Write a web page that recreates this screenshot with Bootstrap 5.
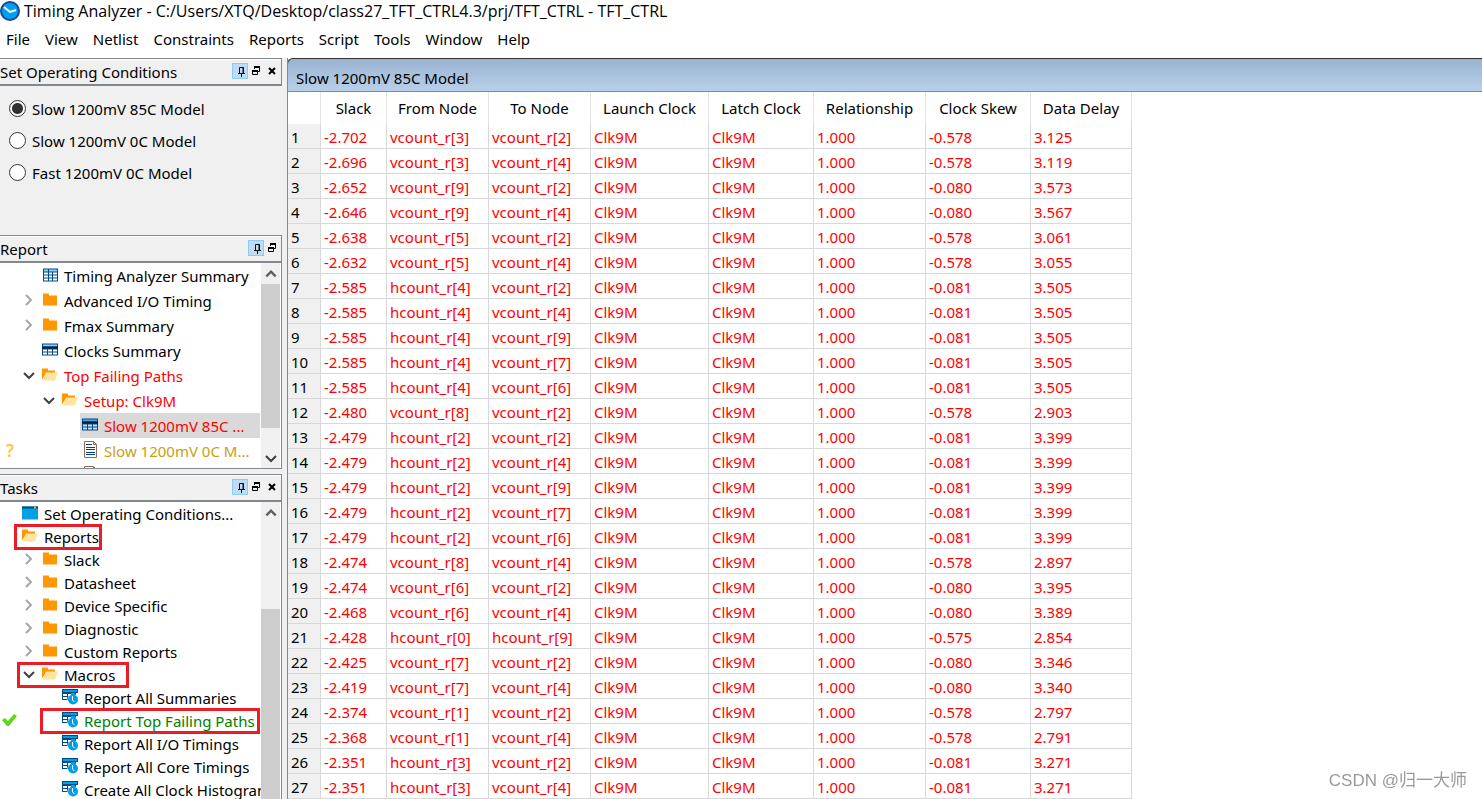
<!DOCTYPE html>
<html lang="en">
<head>
<meta charset="utf-8">
<meta name="viewport" content="width=device-width, initial-scale=1">
<title>Timing Analyzer</title>
<link href="https://cdn.jsdelivr.net/npm/bootstrap@5.3.0/dist/css/bootstrap.min.css" rel="stylesheet">
<style>
  body { font: 15px/24px "Noto Sans", "Noto Sans CJK SC", sans-serif; color: #000; background: #fff; }
  button { padding: 0; border: 0; background: none; color: inherit; }
  svg { display: block; flex: none; }
  .title-bar { height: 22px; font: 16px/22px "Open Sans", "Noto Sans", sans-serif; }
  .menu-bar { height: 36px; gap: 15px; padding: 0 6px 2px; }
  .menu-bar a { color: #000; text-decoration: none; }
  .workspace { background: #f0f0f0; gap: 5px; }
  .dock { width: 282px; }
  .dock-head { height: 28px; border: 1px solid #828790; border-left: 0; border-bottom-width: 2px; box-shadow: inset 0 1px #fff; padding: 0 1px 0 0; }
  .dock-head h2 { font-size: 15px; line-height: 26px; margin: 0; font-weight: 400; }
  .dock-head button { width: 16px; height: 16px; }
  .dock-head .pin { background: #bfdcf4; outline: 1px solid #90c8f6; outline-offset: -1px; }
  .conditions { padding: 7px 9px 46px; }
  .conditions label { height: 32px; gap: 6px; }
  .conditions input { appearance: none; width: 17px; height: 17px; margin: 0 0 2px; border: 1px solid #333; border-radius: 50%; background: #fff; }
  .conditions input:checked { background: radial-gradient(circle, #333 0 5px, #fff 6px); }
  .tree-frame { background: #fff; border-right: 1px solid #828790; }
  .report-frame { height: 206px; border-bottom: 1px solid #828790; margin-bottom: 5px; }
  .tree { min-width: 0; margin: 0; list-style: none; padding: 0 1px 0 0; overflow: hidden; }
  .tree li { position: relative; display: flex; align-items: center; height: 25px; white-space: nowrap; }
  .tasks li { height: 23px; }
  .slot { width: 20px; height: 20px; flex: none; display: flex; align-items: center; justify-content: center; }
  .slot svg { margin: 0 2px 2px 0; }
  .node { flex: 1 1 0; min-width: 0; display: flex; align-items: center; height: 100%; padding-left: 2px; gap: 6px; }
  .node svg { margin-bottom: 3px; }
  .chosen { background: #d9d9d9; }
  .failing { color: #f00; }
  .stale { color: #c8a010; }
  .done { color: #008000; }
  .unknown { color: #ffc34d; font-size: 17px; font-weight: 600; }
  .callout { position: absolute; border: 3px solid #ed1c24; top: -1px; bottom: -2px; pointer-events: none; }
  .scroller { width: 19px; flex: none; background: #f0f0f0; margin-right: 1px; }
  .scroller button { height: 21px; display: flex; align-items: center; justify-content: center; }
  .thumb { background: #cdcdcd; }
  .pane { border-left: 1px solid #828790; background: #fff; min-width: 0; }
  .pane-head { height: 34px; margin-left: -1px; border: solid #333; border-width: 1px 0 0 1px; border-bottom: 1px solid #828790; border-top-left-radius: 6px; background: linear-gradient(#9ab3d0, #b8d0ea); padding: 7px 8px 0; font-size: 15px; line-height: 24px; margin-bottom: 0; font-weight: 400; }
  .paths { table-layout: fixed; width: 844px; border-collapse: separate; border-spacing: 0; }
  .paths th { font-weight: 400; }
  .paths thead th { height: 32px; padding: 0; text-align: center; border-right: 1px solid #e5e5e5; line-height: 24px; }
  .paths td, .paths tbody th { height: 25px; line-height: 20px; padding: 3px 0 1px 3px; border-right: 1px solid #d8d8d8; border-bottom: 1px solid #d8d8d8; white-space: nowrap; }
  .paths td { color: #f00; }
  .paths tbody th { background: #f0f0f0; }
  .watermark { position: fixed; right: 15px; bottom: 6px; font: 17px/24px "Liberation Sans", "Noto Sans CJK SC", sans-serif; color: #999; }
</style>
</head>
<body class="vh-100 d-flex flex-column overflow-hidden">
<svg class="d-none" aria-hidden="true">
  <symbol id="grid" viewBox="0 0 16 16"><path fill="#004a86" d="M1 2h15v13H1z"/><path fill="#8fd0f5" d="M2 3h4v2H2zM7 3h8v2H7z"/><path fill="#fff" d="M2 6h4v2H2zM7 6h3v2H7zM11 6h4v2h-4zM2 9h4v2H2zM7 9h3v2H7zM11 9h4v2h-4zM2 12h4v2H2zM7 12h3v2H7zM11 12h4v2h-4z"/></symbol>
  <symbol id="sheet" viewBox="0 0 16 16"><path fill="#004a86" d="M0 2h16v12H0z"/><path fill="#8fd0f5" d="M1 3h14v2H1z"/><path fill="#001a40" d="M0 5h16v2H0z"/><path fill="#fff" d="M1 8h4v2H1zM6 8h4v2H6zM11 8h4v2h-4zM1 11h4v2H1zM6 11h4v2H6zM11 11h4v2h-4z"/></symbol>
  <symbol id="sheet-on" viewBox="0 0 16 16"><path fill="#004a86" d="M0 2h16v12H0z"/><path fill="#4fa4dc" d="M1 3h14v2H1z"/><path fill="#001a40" d="M0 5h16v2H0z"/><path fill="#c5e0f2" d="M1 8h4v2H1zM6 8h4v2H6zM11 8h4v2h-4zM1 11h4v2H1zM6 11h4v2H6zM11 11h4v2h-4z"/></symbol>
  <symbol id="folder" viewBox="0 0 16 16"><path fill="#ff9800" d="M1 2h6v2h8v10H1z"/></symbol>
  <symbol id="folder-open" viewBox="0 0 16 16"><path fill="#ff9800" d="M0 2h6v2h7v3H4L0 13z"/><path fill="#ffe4a0" d="M4 6h12l-3 8H1z"/></symbol>
  <symbol id="page" viewBox="0 0 16 17"><path fill="#fffdf5" stroke="#8a6d5f" d="M2.500 .5h9l3 3v13h-12z"/><path fill="none" stroke="#8a6d5f" d="M11.500 .5v3h3"/><path stroke="#003f8c" d="M4 3.500h6M4 6.500h9M4 8.500h9M4 11.500h9M4 13.500h9"/></symbol>
  <symbol id="window" viewBox="0 0 16 16"><path fill="#00a0e6" d="M0 2h16v13H0z"/><path fill="#004a86" d="M0 2h16v2H0z"/><path fill="#ffb000" d="M12 2h2v2h-2z"/></symbol>
  <symbol id="timer" viewBox="0 0 16 17"><path fill="#004a86" d="M0 1h16v4h-2v8H0z"/><path fill="#00a0e6" d="M1 2h14v2H1z"/><path fill="#fff" d="M1 6h4v2H1zM6 6h3v2H6zM1 9h4v2H1zM6 9h2v2H6z"/><path fill="#fff" d="M0 12h7v2H0z"/><circle cx="11" cy="11.500" r="5.500" fill="#fff"/><path fill="#00a0e6" d="M9 5h4v2H9z"/><circle cx="11" cy="11.500" r="5" fill="#00a0e6"/><path fill="none" stroke="#fff" d="M10.500 8v4l2 2"/></symbol>
  <symbol id="right" viewBox="0 0 12 12"><path fill="none" stroke="#a6a6a6" stroke-width="2" d="m3 1 5 5-5 5"/></symbol>
  <symbol id="down" viewBox="0 0 12 12"><path fill="none" stroke="#404040" stroke-width="2" d="m1 4 5 5 5-5"/></symbol>
  <symbol id="up" viewBox="0 0 12 12"><path fill="none" stroke="#606060" stroke-width="2" d="m2 8 4-4 4 4"/></symbol>
  <symbol id="tick" viewBox="0 0 16 14"><path fill="#5fd61e" d="m1 7 3-2 3 3 6-7 3 2-8 10H6z"/></symbol>
  <symbol id="pin" viewBox="0 0 16 16"><path fill="none" stroke="#111" d="M7.500 10V4.500h4V10M6 10.500h7M9.500 11v3"/><path stroke="#111" d="M11 4v6"/></symbol>
  <symbol id="float" viewBox="0 0 16 16"><path fill="none" stroke="#000" d="M6.500 6V4.500h5v4H10M4.500 7.500h5v4h-5z"/><path fill="#000" d="M6 3h6v2H6zM4 7h6v2H4z"/></symbol>
  <symbol id="close" viewBox="0 0 16 16"><path stroke="#000" stroke-width="2" d="m5 5 6 6m0-6-6 6"/></symbol>
</svg>

<header>
  <div class="title-bar d-flex align-items-center">
    <svg width="20" height="20" viewBox="0 0 20 20"><circle cx="10" cy="10" r="9" fill="#00a0f0" stroke="#17479e" stroke-width="2"/><path fill="none" stroke="#fff" stroke-width="2" d="m4 6 6 5 6-2"/></svg>
    <span class="ps-1 text-nowrap">Timing Analyzer - C:/Users/XTQ/Desktop/class27_TFT_CTRL4.3/prj/TFT_CTRL - TFT_CTRL</span>
  </div>
  <nav class="menu-bar d-flex align-items-center">
    <a href="#">File</a><a href="#">View</a><a href="#">Netlist</a><a href="#">Constraints</a><a href="#">Reports</a><a href="#">Script</a><a href="#">Tools</a><a href="#">Window</a><a href="#">Help</a>
  </nav>
</header>

<main class="workspace d-flex flex-grow-1 overflow-hidden">
  <aside class="dock d-flex flex-column flex-shrink-0">
    <section>
      <div class="dock-head d-flex">
        <h2 class="flex-grow-1">Set Operating Conditions</h2>
        <div class="d-flex mt-1">
          <button class="pin" aria-label="Pin"><svg width="16" height="16"><use href="#pin"/></svg></button>
          <button aria-label="Float"><svg width="16" height="16"><use href="#float"/></svg></button>
          <button aria-label="Close"><svg width="16" height="16"><use href="#close"/></svg></button>
        </div>
      </div>
      <div class="conditions">
        <label class="d-flex align-items-center" for="c85"><input type="radio" name="model" id="c85" checked>Slow 1200mV 85C Model</label>
        <label class="d-flex align-items-center" for="c0"><input type="radio" name="model" id="c0">Slow 1200mV 0C Model</label>
        <label class="d-flex align-items-center" for="f0"><input type="radio" name="model" id="f0">Fast 1200mV 0C Model</label>
      </div>
    </section>

    <section>
      <div class="dock-head d-flex">
        <h2 class="flex-grow-1">Report</h2>
        <div class="d-flex mt-1">
          <button class="pin" aria-label="Pin"><svg width="16" height="16"><use href="#pin"/></svg></button>
          <button aria-label="Float"><svg width="16" height="16"><use href="#float"/></svg></button>
        </div>
      </div>
      <div class="tree-frame report-frame d-flex">
        <ul class="tree flex-grow-1" id="reportTree"></ul>
        <div class="scroller d-flex flex-column">
          <button aria-label="Scroll up"><svg width="14" height="14"><use href="#up"/></svg></button>
          <div class="thumb" style="height:70%"></div>
          <button class="mt-auto" aria-label="Scroll down"><svg width="12" height="12"><use href="#down"/></svg></button>
        </div>
      </div>
    </section>

    <section class="d-flex flex-column flex-grow-1 overflow-hidden">
      <div class="dock-head d-flex flex-shrink-0">
        <h2 class="flex-grow-1">Tasks</h2>
        <div class="d-flex mt-1">
          <button class="pin" aria-label="Pin"><svg width="16" height="16"><use href="#pin"/></svg></button>
          <button aria-label="Float"><svg width="16" height="16"><use href="#float"/></svg></button>
          <button aria-label="Close"><svg width="16" height="16"><use href="#close"/></svg></button>
        </div>
      </div>
      <div class="tree-frame d-flex flex-grow-1 overflow-hidden">
        <ul class="tree tasks flex-grow-1" id="taskTree"></ul>
        <div class="scroller d-flex flex-column">
          <button aria-label="Scroll up"><svg width="14" height="14"><use href="#up"/></svg></button>
          <div class="thumb mt-auto" style="height:64%"></div>
        </div>
      </div>
    </section>
  </aside>

  <section class="pane flex-grow-1 overflow-hidden">
    <h1 class="pane-head">Slow 1200mV 85C Model</h1>
    <table class="paths">
      <colgroup><col style="width:33px"><col style="width:66px"><col style="width:102px"><col style="width:102px"><col style="width:118px"><col style="width:105px"><col style="width:112px"><col style="width:105px"><col style="width:101px"></colgroup>
      <thead><tr><th></th><th>Slack</th><th>From Node</th><th>To Node</th><th>Launch Clock</th><th>Latch Clock</th><th>Relationship</th><th>Clock Skew</th><th>Data Delay</th></tr></thead>
      <tbody id="pathRows"></tbody>
    </table>
  </section>
</main>
<div class="watermark">CSDN @归一大师</div>

<script>
  // level, icon, label, arrow, text class, status, callout [left, right]
  const report = [
    [1, 'grid', 'Timing Analyzer Summary'],
    [1, 'folder', 'Advanced I/O Timing', 'right'],
    [1, 'folder', 'Fmax Summary', 'right'],
    [1, 'sheet', 'Clocks Summary'],
    [1, 'folder-open', 'Top Failing Paths', 'down', 'failing'],
    [2, 'folder-open', 'Setup: Clk9M', 'down', 'failing'],
    [3, 'sheet-on', 'Slow 1200mV 85C ...', '', 'failing chosen'],
    [3, 'page', 'Slow 1200mV 0C M...', '', 'stale', '?'],
    [3, 'page', '', '', 'stale']
  ];
  const tasks = [
    [0, 'window', 'Set Operating Conditions...'],
    [0, 'folder-open', 'Reports', '', '', '', [14, 158]],
    [1, 'folder', 'Slack', 'right'],
    [1, 'folder', 'Datasheet', 'right'],
    [1, 'folder', 'Device Specific', 'right'],
    [1, 'folder', 'Diagnostic', 'right'],
    [1, 'folder', 'Custom Reports', 'right'],
    [1, 'folder-open', 'Macros', 'down', '', '', [17, 131]],
    [2, 'timer', 'Report All Summaries'],
    [2, 'timer', 'Report Top Failing Paths', '', 'done', 'tick', [40, 0]],
    [2, 'timer', 'Report All I/O Timings'],
    [2, 'timer', 'Report All Core Timings'],
    [2, 'timer', 'Create All Clock Histograms']
  ];
  const icon = (name, w, h) => `<svg width="${w}" height="${h}"><use href="#${name}"/></svg>`;
  const item = ([level, pic, text, arrow, cls, status, box]) => {
    const mark = status === 'tick' ? icon('tick', 16, 14) : status ? `<span class="unknown">${status}</span>` : '';
    const slots = level ? '<i class="slot"></i>'.repeat(level - 1) + `<i class="slot">${arrow ? icon(arrow, 12, 12) : ''}</i>` : '';
    return `<li><b class="slot fw-normal">${mark}</b>${slots}<div class="node ${cls || ''}">${icon(pic, 16, 17)}<span>${text}</span></div>`
      + (box ? `<div class="callout" style="left:${box[0]}px;right:${box[1]}px"></div>` : '') + '</li>';
  };
  reportTree.innerHTML = report.map(item).join('');
  taskTree.innerHTML = tasks.map(item).join('');

  // slack, from, to, skew, delay
  const paths = `-2.702 v3 v2 -0.578 3.125
-2.696 v3 v4 -0.578 3.119
-2.652 v9 v2 -0.080 3.573
-2.646 v9 v4 -0.080 3.567
-2.638 v5 v2 -0.578 3.061
-2.632 v5 v4 -0.578 3.055
-2.585 h4 v2 -0.081 3.505
-2.585 h4 v4 -0.081 3.505
-2.585 h4 v9 -0.081 3.505
-2.585 h4 v7 -0.081 3.505
-2.585 h4 v6 -0.081 3.505
-2.480 v8 v2 -0.578 2.903
-2.479 h2 v2 -0.081 3.399
-2.479 h2 v4 -0.081 3.399
-2.479 h2 v9 -0.081 3.399
-2.479 h2 v7 -0.081 3.399
-2.479 h2 v6 -0.081 3.399
-2.474 v8 v4 -0.578 2.897
-2.474 v6 v2 -0.080 3.395
-2.468 v6 v4 -0.080 3.389
-2.428 h0 h9 -0.575 2.854
-2.425 v7 v2 -0.080 3.346
-2.419 v7 v4 -0.080 3.340
-2.374 v1 v2 -0.578 2.797
-2.368 v1 v4 -0.578 2.791
-2.351 h3 v2 -0.081 3.271
-2.351 h3 v4 -0.081 3.271`.split('\n').map(line => line.split(' '));
  const reg = s => `${s[0]}count_r[${s[1]}]`;
  pathRows.innerHTML = paths.map(([slack, from, to, skew, delay], i) =>
    `<tr><th scope="row">${i + 1}</th>` + [slack, reg(from), reg(to), 'Clk9M', 'Clk9M', '1.000', skew, delay].map(v => `<td>${v}</td>`).join('') + '</tr>').join('');
</script>
<script src="https://cdn.jsdelivr.net/npm/bootstrap@5.3.0/dist/js/bootstrap.bundle.min.js"></script>
</body>
</html>
